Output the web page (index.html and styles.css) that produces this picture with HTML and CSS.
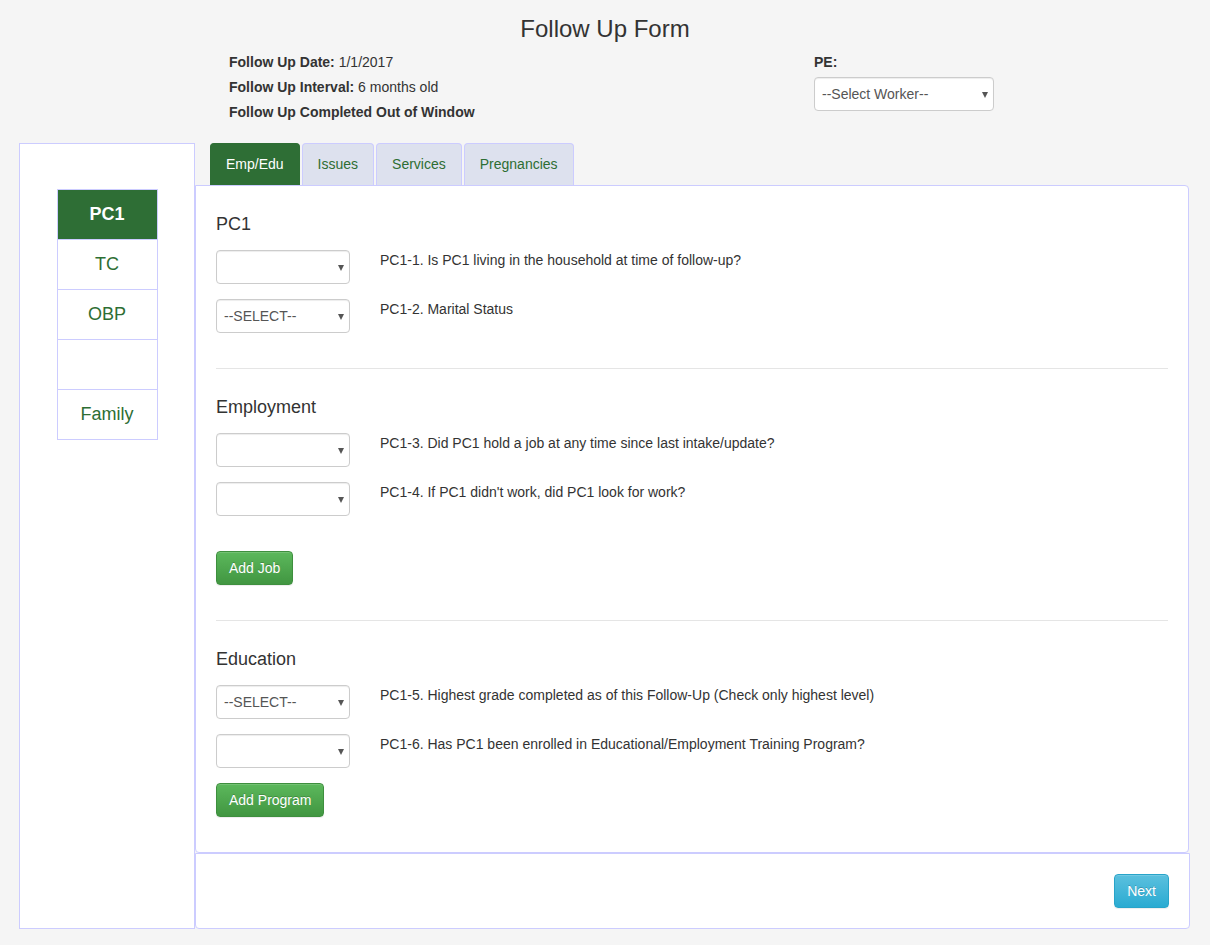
FILE: index.html
```html
<!DOCTYPE html>
<html>
<head>
<meta charset="utf-8">
<title>Follow Up Form</title>
<link rel="stylesheet" href="styles.css">
</head>
<body>
<header class="page-head">
  <h1 class="title">Follow Up Form</h1>
  <div class="info">
    <div class="info-left">
      <div class="info-line"><b>Follow Up Date:</b> 1/1/2017</div>
      <div class="info-line"><b>Follow Up Interval:</b> 6 months old</div>
      <div class="info-line"><b>Follow Up Completed Out of Window</b></div>
    </div>
    <div class="info-right">
      <div class="info-line"><b>PE:</b></div>
      <div class="sel sel-worker"><select><option>--Select Worker--</option></select></div>
    </div>
  </div>
</header>

<main class="body-row">
  <aside class="sidebar">
    <ul class="side-nav">
      <li class="side-item active">PC1</li>
      <li class="side-item">TC</li>
      <li class="side-item">OBP</li>
      <li class="side-item"></li>
      <li class="side-item">Family</li>
    </ul>
  </aside>

  <section class="content">
    <nav class="tabs">
      <div class="tab active">Emp/Edu</div>
      <div class="tab">Issues</div>
      <div class="tab">Services</div>
      <div class="tab">Pregnancies</div>
    </nav>
    <div class="panel">
      <div class="group">
        <h4 class="group-title">PC1</h4>
        <div class="q-row">
          <div class="sel"><select><option></option></select></div>
          <div class="q-label">PC1-1. Is PC1 living in the household at time of follow-up?</div>
        </div>
        <div class="q-row">
          <div class="sel"><select><option>--SELECT--</option></select></div>
          <div class="q-label">PC1-2. Marital Status</div>
        </div>
      </div>
      <div class="group">
        <h4 class="group-title">Employment</h4>
        <div class="q-row">
          <div class="sel"><select><option></option></select></div>
          <div class="q-label">PC1-3. Did PC1 hold a job at any time since last intake/update?</div>
        </div>
        <div class="q-row">
          <div class="sel"><select><option></option></select></div>
          <div class="q-label">PC1-4. If PC1 didn't work, did PC1 look for work?</div>
        </div>
        <div class="btn-row spaced"><button class="btn btn-success">Add Job</button></div>
      </div>
      <div class="group">
        <h4 class="group-title">Education</h4>
        <div class="q-row">
          <div class="sel"><select><option>--SELECT--</option></select></div>
          <div class="q-label">PC1-5. Highest grade completed as of this Follow-Up (Check only highest level)</div>
        </div>
        <div class="q-row">
          <div class="sel"><select><option></option></select></div>
          <div class="q-label">PC1-6. Has PC1 been enrolled in Educational/Employment Training Program?</div>
        </div>
        <div class="btn-row"><button class="btn btn-success">Add Program</button></div>
      </div>
    </div>
    <div class="panel-foot">
      <button class="btn btn-info">Next</button>
    </div>
  </section>
</main>
</body>
</html>
```

FILE: styles.css
```css
* { box-sizing: border-box; }

body {
  margin: 0;
  background: #f5f5f5;
  font-family: "Liberation Sans", Arial, sans-serif;
  font-size: 14px;
  line-height: 20px;
  color: #333;
}

.page-head {
  padding-top: 16px;
}

.title {
  margin: 0;
  text-align: center;
  font-size: 24px;
  line-height: 26px;
  font-weight: normal;
  color: #333;
}

.info {
  display: flex;
  padding-left: 229px;
  margin-top: 10px;
}

.info-left {
  width: 585px;
}

.info-line {
  line-height: 20px;
  margin-bottom: 5px;
}

.info-line b { font-weight: bold; }

.sel {
  position: relative;
  width: 134px;
  height: 34px;
}

.sel select {
  -webkit-appearance: none;
  appearance: none;
  width: 100%;
  height: 100%;
  margin: 0;
  padding: 0 20px 0 7px;
  border: 1px solid #ccc;
  border-radius: 4px;
  background: #fff;
  font-family: "Liberation Sans", Arial, sans-serif;
  font-size: 14px;
  color: #555;
  box-shadow: inset 0 1px 1px rgba(0,0,0,0.075);
}

.sel::after {
  content: "";
  position: absolute;
  right: 6px;
  top: 15px;
  width: 0;
  height: 0;
  border-left: 3.5px solid transparent;
  border-right: 3.5px solid transparent;
  border-top: 6px solid #555;
  pointer-events: none;
}

.sel-worker {
  width: 180px;
}

.body-row {
  display: flex;
  padding: 0 20px 0 19px;
  margin-top: 16px;
}

.sidebar {
  width: 176px;
  flex: none;
  background: #fff;
  border: 1px solid #ccccff;
  padding-top: 45px;
}

.side-nav {
  list-style: none;
  margin: 0 auto;
  padding: 0;
  width: 101px;
}

.side-item {
  height: 51px;
  margin-top: -1px;
  border: 1px solid #ccccff;
  color: #2d6e33;
  font-size: 18px;
  line-height: 49px;
  text-align: center;
  background: #fff;
}

.side-item:first-child { margin-top: 0; }

.side-item.active {
  background: #2e6e35;
  color: #fff;
  font-weight: bold;
}

.content {
  flex: 1;
  display: flex;
  flex-direction: column;
}

.tabs {
  display: flex;
  gap: 2px;
  padding-left: 15px;
  height: 42px;
}

.tab {
  height: 42px;
  padding: 0 15px;
  line-height: 41px;
  border: 1px solid #ccccff;
  border-bottom: none;
  border-radius: 4px 4px 0 0;
  background: #dde1ee;
  color: #2d6e33;
}

.tab.active {
  background: #2e6e35;
  border-color: #2e6e35;
  color: #fff;
}

.panel {
  background: #fff;
  border: 1px solid #ccccff;
  border-radius: 0 4px 4px 4px;
  padding: 0 20px;
  margin-right: 1px;
}

.group {
  padding: 28px 0 35px;
  border-top: 1px solid #e5e5e5;
}

.group:first-child { border-top: none; }

.group-title {
  margin: 0 0 16px;
  font-size: 18px;
  line-height: 20px;
  font-weight: normal;
  color: #333;
}

.q-row {
  display: flex;
  gap: 30px;
  margin-bottom: 15px;
}

.q-row:last-of-type { margin-bottom: 0; }

.q-row .sel { flex: none; }

.q-label {
  line-height: 20px;
  color: #333;
}

.btn-row { margin-top: 15px; }
.btn-row.spaced { margin-top: 35px; }

.btn {
  height: 34px;
  padding: 0 12px;
  border-radius: 4px;
  font-family: "Liberation Sans", Arial, sans-serif;
  font-size: 14px;
  color: #fff;
  cursor: pointer;
  text-shadow: 0 -1px 0 rgba(0,0,0,0.2);
  box-shadow: inset 0 1px 0 rgba(255,255,255,0.15), 0 1px 1px rgba(0,0,0,0.075);
}

.btn-success {
  background: linear-gradient(to bottom, #5cb85c 0%, #419641 100%);
  border: 1px solid #3e8f3e;
}

.btn-info {
  background: linear-gradient(to bottom, #5bc0de 0%, #2aabd2 100%);
  border: 1px solid #28a4c9;
}

.panel-foot {
  background: #fff;
  border: 1px solid #ccccff;
  border-radius: 0 0 4px 4px;
  padding: 20px;
  display: flex;
  justify-content: flex-end;
  align-items: flex-start;
  flex: 1;
}
```
